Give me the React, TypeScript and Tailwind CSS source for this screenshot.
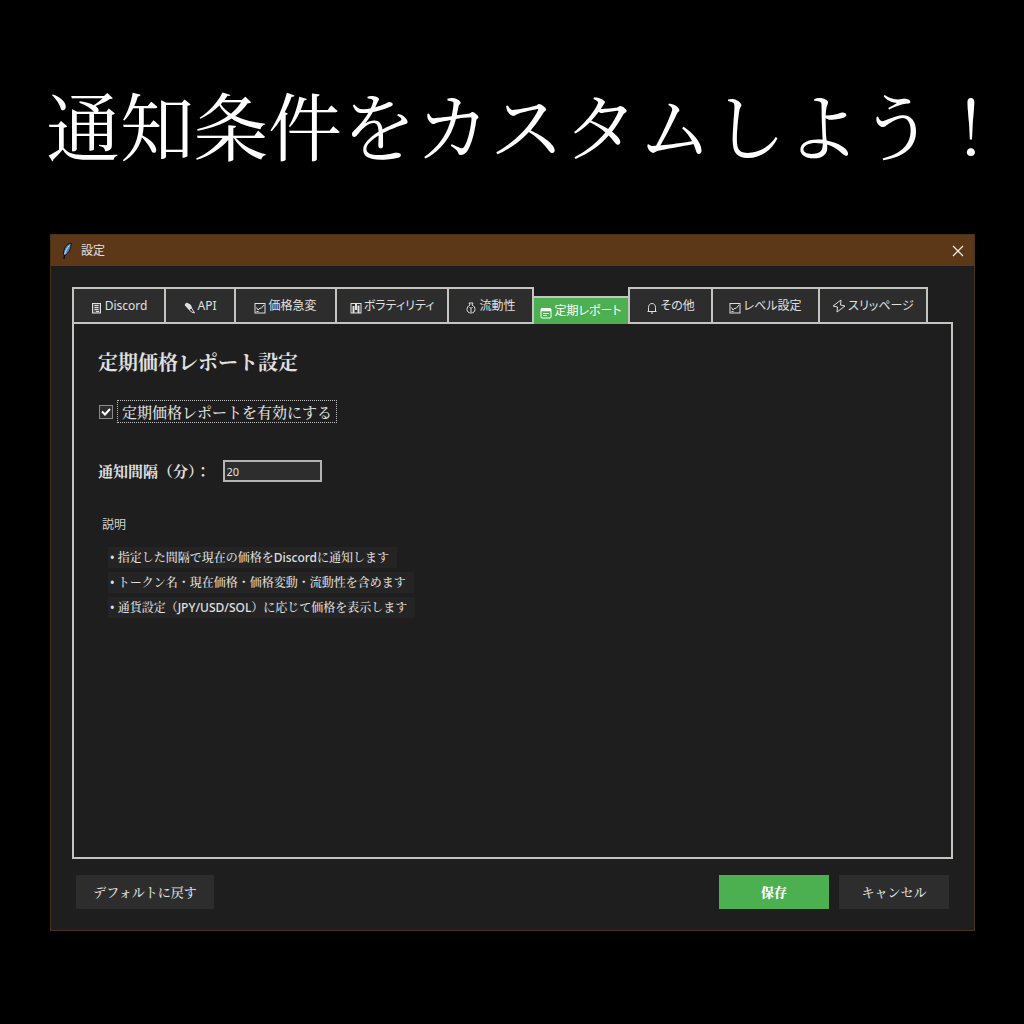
import { useState } from 'react';
import type { ReactNode } from 'react';

const tabs = [
  { id: 'discord', label: 'Discord', width: 'w-[92px]', icon: <NoteIcon /> },
  { id: 'api', label: 'API', width: 'w-[70px]', icon: <PlugIcon /> },
  { id: 'price', label: '価格急変', width: 'w-[101px]', icon: <ChartIcon /> },
  { id: 'volatility', label: 'ボラティリティ', width: 'w-[112px]', icon: <BarsIcon /> },
  { id: 'liquidity', label: '流動性', width: 'w-[87px]', icon: <BagIcon /> },
  { id: 'report', label: '定期レポート', width: 'w-[94px]', icon: <CalendarIcon /> },
  { id: 'other', label: 'その他', width: 'w-[83px]', icon: <BellIcon /> },
  { id: 'level', label: 'レベル設定', width: 'w-[107px]', icon: <ChartIcon /> },
  { id: 'slippage', label: 'スリッページ', width: 'w-[110px]', icon: <BoltIcon /> },
];

const notes = [
  '指定した間隔で現在の価格をDiscordに通知します',
  'トークン名・現在価格・価格変動・流動性を含めます',
  '通貨設定（JPY/USD/SOL）に応じて価格を表示します',
];

export default function App() {
  const [active, setActive] = useState('report');
  const [enabled, setEnabled] = useState(true);
  const [interval, setInterval] = useState('20');

  return (
    <main
      lang="ja"
      className="flex min-h-screen flex-col overflow-x-hidden bg-black pr-[49px] pb-[93px] pl-[50px] font-['Noto_Serif_CJK_JP','Noto_Serif_JP','Noto_Sans_CJK_JP',serif] text-[#e0e0e0]"
    >
      <h1 className="-ml-1 flex h-[234px] items-center pt-3 text-[74px] font-normal whitespace-nowrap text-white">
        通知条件をカスタムしよう！
      </h1>

      <section className="flex flex-1 flex-col border border-[#4a3219] bg-[#1e1e1e]">
        <div className="flex h-[31px] items-center bg-[#5c3818] pr-2 pl-2.5 font-['Noto_Sans','Noto_Sans_CJK_JP',sans-serif]">
          <FeatherIcon />
          <h2 className="ml-2 flex-1 text-[12px]">設定</h2>
          <button type="button" aria-label="閉じる" className="p-0.5">
            <svg viewBox="0 0 12 12" className="size-3" fill="none" stroke="#f0e8e0" strokeWidth="1.3">
              <path d="M1 1l10 10M11 1L1 11" />
            </svg>
          </button>
        </div>

        <div className="flex flex-1 flex-col px-[21px] pt-[21px] pb-[21px]">
          <div role="tablist" className="flex h-[35px] items-end">
            {tabs.map((t) => (
              <Tab
                key={t.id}
                label={t.label}
                width={t.width}
                icon={t.icon}
                active={t.id === active}
                onClick={() => setActive(t.id)}
              />
            ))}
          </div>

          <div role="tabpanel" className="flex-1 border-2 border-[#c4c4c0] px-6 pt-5">
            <h3 className="text-[20px] leading-9 font-bold">定期価格レポート設定</h3>

            <label className="mt-5 flex items-center gap-1 text-[15px] font-medium">
              <span className="grid size-[15px] place-items-center">
                <input
                  type="checkbox"
                  checked={enabled}
                  onChange={(e) => setEnabled(e.target.checked)}
                  className="col-start-1 row-start-1 size-3.5 appearance-none border border-[#8a8a8a] bg-[#2d2d2d] outline-none"
                />
                {enabled && (
                  <svg
                    viewBox="0 0 10 10"
                    className="pointer-events-none col-start-1 row-start-1 size-2.5"
                    fill="none"
                    stroke="#fff"
                    strokeWidth="2"
                  >
                    <path d="M1 4.5l3 3L9 2" />
                  </svg>
                )}
              </span>
              <span className="border border-dotted border-[#c0c0c0] px-1 leading-[21px]">
                定期価格レポートを有効にする
              </span>
            </label>

            <div className="mt-9 flex items-center gap-3">
              <label htmlFor="interval" className="text-[15px] leading-6 font-bold">
                通知間隔（分）：
              </label>
              <input
                id="interval"
                type="text"
                value={interval}
                onChange={(e) => setInterval(e.target.value)}
                className="h-[22px] w-[99px] border-2 border-[#b4b4b4] bg-[#2d2d2d] px-0.5 font-['Noto_Sans',sans-serif] text-[11px] outline-none"
              />
            </div>

            <h4 className="mt-8 ml-1 font-['Noto_Sans','Noto_Sans_CJK_JP',sans-serif] text-[12px] leading-5 text-[#d0d0d0]">
              説明
            </h4>
            <ul className="mt-3 ml-2.5 flex flex-col items-start gap-1 font-['Noto_Sans','Noto_Serif_CJK_JP','Noto_Serif_JP','Noto_Sans_CJK_JP',sans-serif] text-[12px] leading-[21px] font-medium">
              {notes.map((n) => (
                <li key={n} className="bg-[#242424] pr-2 pl-0.5 whitespace-nowrap">
                  • {n}
                </li>
              ))}
            </ul>
          </div>

          <div className="mt-4 flex gap-2.5 px-1 text-[13px] font-medium">
            <button type="button" className="mr-auto h-[34px] w-[138px] bg-[#2d2d2d]">
              デフォルトに戻す
            </button>
            <button type="button" className="h-[34px] w-[110px] bg-[#4caf50] font-black text-white">
              保存
            </button>
            <button type="button" className="h-[34px] w-[110px] bg-[#2d2d2d]">
              キャンセル
            </button>
          </div>
        </div>
      </section>
    </main>
  );
}

type TabProps = { label: string; width: string; icon: ReactNode; active: boolean; onClick: () => void };

function Tab({ label, width, icon, active, onClick }: TabProps) {
  return (
    <button
      type="button"
      role="tab"
      aria-selected={active}
      onClick={onClick}
      className={`flex shrink-0 items-center justify-center gap-0.5 border-t-2 border-[#c4c4c0] font-['Noto_Sans','Noto_Sans_CJK_JP',sans-serif] text-[12px] whitespace-nowrap [font-feature-settings:'palt'] ${width} ${
        active
          ? 'z-10 -mb-0.5 h-7 bg-[#4caf50] text-white'
          : 'h-[35px] border-l-2 bg-[#2d2d2d] last:border-r-2 has-[+[aria-selected=true]]:border-r-2'
      }`}
    >
      <span className="mt-1">{icon}</span>
      {label}
    </button>
  );
}

function Icon({ children }: { children: ReactNode }) {
  return (
    <svg viewBox="0 0 12 12" className="size-3" fill="none" stroke="currentColor" strokeWidth="1">
      {children}
    </svg>
  );
}

function NoteIcon() {
  return (
    <Icon>
      <rect x="1.5" y="1.5" width="8" height="9.5" fill="#555" />
      <path d="M3.5 3.5h4M3.5 5.5h4M3.5 7.5h4M5 9.5h3" />
    </Icon>
  );
}

function PlugIcon() {
  return (
    <Icon>
      <path d="M1 3l1.500-2 4 2 1 3L5 7.500z" fill="currentColor" />
      <path d="M5 7.500L7.500 6l3 5-3-1z" />
    </Icon>
  );
}

function ChartIcon() {
  return (
    <Icon>
      <rect x="1" y="1.5" width="10" height="9.5" />
      <path d="M2.500 5.500L4 8l2-2 1 .5L10 3M2.500 9.500h2" />
    </Icon>
  );
}

function BarsIcon() {
  return (
    <Icon>
      <rect x="1" y="1.5" width="10" height="9.5" />
      <path d="M3.500 11V4M6 8V2M8.500 11V3.500" strokeWidth="2" />
    </Icon>
  );
}

function BagIcon() {
  return (
    <Icon>
      <path d="M4 1h4L7 3c2 1 3 2.500 3 4.500C10 9.500 8.500 11 6 11S2 9.500 2 7.500C2 5.500 3 4 5 3z" />
      <path d="M4.500 5L6 6.500 7.500 5M6 6.500V10" />
    </Icon>
  );
}

function CalendarIcon() {
  return (
    <Icon>
      <rect x="1" y="1.5" width="10" height="9.5" rx="1" />
      <path d="M1 3h10" strokeWidth="2.5" />
      <path d="M3 6.500h6M3 8.500h4" />
    </Icon>
  );
}

function BellIcon() {
  return (
    <Icon>
      <path d="M1.500 9.500h9M2.500 9.500v-4c0-2.500 1.500-4 3.500-4s3.500 1.500 3.500 4v4M5 11h2" />
    </Icon>
  );
}

function BoltIcon() {
  return (
    <svg viewBox="0 0 14 14" className="mb-1 size-3.5" fill="none" stroke="currentColor" strokeWidth="1">
      <path d="M9 1L1 7l4.500 1L5 13l8-6-4.500-1z" strokeLinejoin="round" />
    </svg>
  );
}

function FeatherIcon() {
  return (
    <svg viewBox="0 0 12 18" className="h-[18px] w-3">
      <path d="M10 1C5.500 2 2.500 6.500 2.500 12L4 13.500C8 11 10.500 6 10 1z" fill="#4d86bd" stroke="#111" />
      <path d="M8.500 3.500C6 6 4.500 9 3.500 13" fill="none" stroke="#d5e6f5" />
      <path d="M3.500 12.500L3 17" fill="none" stroke="#111" strokeWidth="1.5" />
    </svg>
  );
}
